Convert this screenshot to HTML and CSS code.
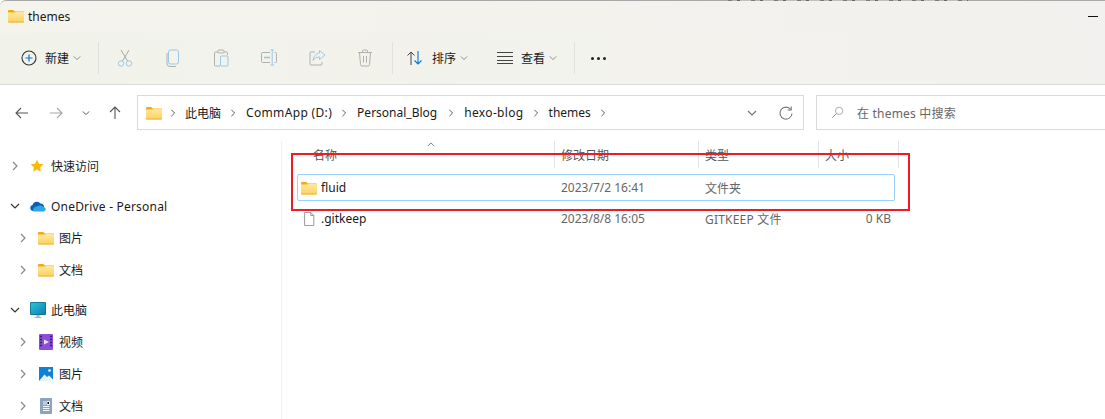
FILE: index.html
```html
<!DOCTYPE html>
<html lang="zh-CN">
<head>
<meta charset="utf-8">
<title>themes</title>
<link rel="stylesheet" href="styles.css">
</head>
<body>
<svg class="defs" width="0" height="0" aria-hidden="true">
  <defs>
    <linearGradient id="fg" x1="0" y1="0" x2="0" y2="1"><stop offset="0" stop-color="#ffe9a0"/><stop offset="1" stop-color="#fcd05e"/></linearGradient>
    <symbol id="folder" viewBox="0 0 16 14">
      <path d="M0 2a1 1 0 0 1 1-1h4.200l1.600 1.600H15a1 1 0 0 1 1 1V4H0z" fill="#f4a90f"/>
      <path d="M0 3.600h6.800L8 3h7a1 1 0 0 1 1 1v8.600a1 1 0 0 1-1 1H1a1 1 0 0 1-1-1z" fill="url(#fg)"/>
      <path d="M0 12.600h16a1 1 0 0 1-1 1H1a1 1 0 0 1-1-1z" fill="#eeb23a"/>
    </symbol>
    <symbol id="chev-r" viewBox="0 0 10 10"><path d="M3 1l4 4-4 4" fill="none" stroke="currentColor" stroke-width="1.2"/></symbol>
    <symbol id="chev-d" viewBox="0 0 10 10"><path d="M1 3l4 4 4-4" fill="none" stroke="currentColor" stroke-width="1.2"/></symbol>
  </defs>
</svg>
<div class="window">
  <header class="titlebar">
    <div class="top-noise"></div>
    <svg class="ico-16"><use href="#folder"/></svg>
    <span class="title">themes</span>
    <span class="minimize"></span>
  </header>
  <div class="toolbar">
    <button class="tool tool-new">
      <svg class="ico-20" viewBox="0 0 20 20"><circle cx="10" cy="10" r="7" fill="none" stroke="#333" stroke-width="1.1"/><path d="M10 6.500v7M6.500 10h7" stroke="#0a78d4" stroke-width="1.2"/></svg>
      <span>新建</span><svg class="caret"><use href="#chev-d"/></svg>
    </button>
    <i class="sep"></i>
    <div class="disabled-group">
      <svg class="ico-20" viewBox="0 0 20 20"><path d="M6 2l6.500 11M14 2L7.500 13" fill="none" stroke="#a9a9a9" stroke-width="1"/><circle cx="6" cy="15.500" r="2.700" fill="none" stroke="#9cc8e8"/><circle cx="14" cy="15.500" r="2.700" fill="none" stroke="#9cc8e8"/></svg>
      <svg class="ico-20" viewBox="0 0 20 20"><rect x="5.500" y="2" width="10" height="14" rx="2" fill="none" stroke="#9cc8e8"/><path d="M4 5v11a3 3 0 0 0 3 2.500h6" fill="none" stroke="#b0b0b0"/></svg>
      <svg class="ico-20" viewBox="0 0 20 20"><path d="M7 4H4.500a1 1 0 0 0-1 1v12a1 1 0 0 0 1 1H9M13 4h2.500a1 1 0 0 1 1 1v2" fill="none" stroke="#b0b0b0"/><rect x="7" y="2" width="6" height="3" rx="1" fill="none" stroke="#b0b0b0"/><rect x="9.500" y="8" width="7.500" height="10" rx="1" fill="none" stroke="#9cc8e8"/></svg>
      <svg class="ico-20" viewBox="0 0 20 20"><path d="M11 4.500H3.500a1 1 0 0 0-1 1v8a1 1 0 0 0 1 1H11M15.500 4.500h1a1 1 0 0 1 1 1v8a1 1 0 0 1-1 1h-1" fill="none" stroke="#b0b0b0"/><path d="M13.200 2v15M11.500 2h3.500M11.500 17H15" fill="none" stroke="#9cc8e8"/><path d="M5 9.500h6" stroke="#9cc8e8" stroke-width="1.600"/></svg>
      <svg class="ico-20" viewBox="0 0 20 20"><path d="M8 4H4a1 1 0 0 0-1 1v11a1 1 0 0 0 1 1h10a1 1 0 0 0 1-1v-2" fill="none" stroke="#b0b0b0"/><path d="M12.500 2.500l5.500 4.500-5.500 4.500V9c-3 0-5 1-6.500 3.500C6.500 8.500 9 5.500 12.500 5z" fill="none" stroke="#9cc8e8"/></svg>
      <svg class="ico-20" viewBox="0 0 20 20"><path d="M3 4.500h14M7.500 4.500V3a1 1 0 0 1 1-1h3a1 1 0 0 1 1 1v1.500M4.500 4.500l1 12a1.500 1.500 0 0 0 1.500 1.500h6a1.500 1.500 0 0 0 1.500-1.500l1-12M8.500 8v6.500M11.500 8v6.500" fill="none" stroke="#b0b0b0"/></svg>
    </div>
    <i class="sep"></i>
    <button class="tool tool-sort">
      <svg class="ico-20" viewBox="0 0 20 20"><path d="M6 17V4M2.500 7.500L6 4l3.500 3.500" fill="none" stroke="#444" stroke-width="1"/><path d="M13 3v13M9.500 12.500L13 16l3.500-3.500" fill="none" stroke="#0a78d4" stroke-width="1.100"/></svg>
      <span>排序</span><svg class="caret"><use href="#chev-d"/></svg>
    </button>
    <button class="tool tool-view">
      <svg class="ico-20" viewBox="0 0 20 20"><path d="M2 4.500h16M2 8.500h16M2 12.500h16M2 15.500h16" stroke="#444" stroke-width="1"/></svg>
      <span>查看</span><svg class="caret"><use href="#chev-d"/></svg>
    </button>
    <i class="sep sep-last"></i>
    <div class="more"><b></b><b></b><b></b></div>
  </div>
  <nav class="navrow">
    <svg class="nav-btn" viewBox="0 0 16 16"><path d="M14 8H2M7 3L2 8l5 5" fill="none" stroke="#555" stroke-width="1.100"/></svg>
    <svg class="nav-btn nav-fwd" viewBox="0 0 16 16"><path d="M2 8h12M9 3l5 5-5 5" fill="none" stroke="#a6a6a6" stroke-width="1.100"/></svg>
    <svg class="nav-drop"><use href="#chev-d"/></svg>
    <svg class="nav-btn nav-up" viewBox="0 0 16 16"><path d="M8 14V2M3 7l5-5 5 5" fill="none" stroke="#555" stroke-width="1.100"/></svg>
    <div class="address">
      <svg class="ico-16"><use href="#folder"/></svg>
      <svg class="crumb-sep crumb-first"><use href="#chev-r"/></svg><span>此电脑</span>
      <svg class="crumb-sep"><use href="#chev-r"/></svg><span class="wide">CommApp (D:)</span>
      <svg class="crumb-sep"><use href="#chev-r"/></svg><span class="pad-end">Personal_Blog</span>
      <svg class="crumb-sep"><use href="#chev-r"/></svg><span class="wide">hexo-blog</span>
      <svg class="crumb-sep"><use href="#chev-r"/></svg><span>themes</span>
      <svg class="crumb-sep"><use href="#chev-r"/></svg>
      <svg class="addr-drop"><use href="#chev-d"/></svg>
      <svg class="addr-refresh" viewBox="0 0 16 16"><path d="M12.800 4.500A6 6 0 1 0 14 8.500" fill="none" stroke="#777" stroke-width="1.100"/><path d="M13.200 1.500v3.500H9.700" fill="none" stroke="#777" stroke-width="1.100"/></svg>
    </div>
    <div class="search">
      <svg class="search-ico" viewBox="0 0 16 16"><circle cx="10" cy="6" r="4.500" fill="none" stroke="#9a9a9a"/><path d="M6.500 9.500L1.500 14.500" stroke="#8a78a8" stroke-width="1.100"/></svg>
      <span class="wide-sm">在 themes 中搜索</span>
    </div>
  </nav>
  <main class="main">
    <aside class="sidebar">
      <div class="tree-group">
        <div class="tree-row"><svg class="arrow"><use href="#chev-r"/></svg>
          <svg class="ico-16 ico-star" viewBox="0 0 16 16"><path d="M8 .8l2.200 4.700 5 .6-3.700 3.500 1 5L8 12.100l-4.500 2.500 1-5L.8 6.100l5-.6z" fill="#fdb900"/></svg><span>快速访问</span></div>
      </div>
      <div class="tree-group">
        <div class="tree-row"><svg class="arrow arrow-open"><use href="#chev-d"/></svg>
          <svg class="ico-16" viewBox="0 0 16 11"><path d="M3 10.500a3 3 0 0 1-.5-5.900A4.500 4.500 0 0 1 10.500 3 3.500 3.500 0 0 1 14 6.500l-9 4z" fill="#0a5fb4"/><path d="M3.500 11a3 3 0 0 1-.5-1.500c0-2 2-3.500 4-3.500 1.500-1.500 5-1.500 6.500.5A2.300 2.300 0 0 1 14 11z" fill="#2fa5e6"/></svg><span class="wide-sm">OneDrive - Personal</span></div>
        <div class="tree-row sub"><svg class="arrow"><use href="#chev-r"/></svg><svg class="ico-16"><use href="#folder"/></svg><span>图片</span></div>
        <div class="tree-row sub"><svg class="arrow"><use href="#chev-r"/></svg><svg class="ico-16"><use href="#folder"/></svg><span>文档</span></div>
      </div>
      <div class="tree-group">
        <div class="tree-row"><svg class="arrow arrow-open"><use href="#chev-d"/></svg>
          <svg class="ico-monitor" viewBox="0 0 16 16"><defs><linearGradient id="mon" x1="0" y1="0" x2="1" y2="1"><stop offset="0" stop-color="#2cc4d8"/><stop offset="1" stop-color="#0f7fb0"/></linearGradient></defs><rect x="6.500" y="12" width="3" height="3" fill="#a8b4bc"/><rect x="4.500" y="15" width="7" height="1" fill="#a8b4bc"/><rect y="0" width="16" height="13" rx="1" fill="#0f6f8f"/><rect x=".8" y=".8" width="14.400" height="11.400" fill="url(#mon)"/></svg><span>此电脑</span></div>
        <div class="tree-row sub"><svg class="arrow"><use href="#chev-r"/></svg>
          <svg class="ico-14" viewBox="0 0 14 16"><rect width="14" height="16" rx="1" fill="#8a4fd8"/><path d="M5 5.500l5 2.500-5 2.500z" fill="#efe6fb"/><path d="M1 2.500h2M1 5.500h2M1 8.500h2M1 11.500h2M11 2.500h2M11 5.500h2M11 8.500h2M11 11.500h2" stroke="#3c1a7a" stroke-width="1.300"/></svg><span>视频</span></div>
        <div class="tree-row sub"><svg class="arrow"><use href="#chev-r"/></svg>
          <svg class="ico-14" viewBox="0 0 14 14"><rect width="14" height="14" fill="#1082d6"/><path d="M0 14l5.500-6.500 2.500 2.500 2-1.500 4 4v1.500z" fill="#eaf5fc"/><circle cx="10.500" cy="3.500" r="1.300" fill="#fff"/></svg><span>图片</span></div>
        <div class="tree-row sub"><svg class="arrow"><use href="#chev-r"/></svg>
          <svg class="ico-14" viewBox="0 0 12 16"><rect width="12" height="16" rx="1" fill="#8aa4c0"/><path d="M3 4h3M3 6h3M7 3.500h2.500v3H7zM3 8.500h6.500M3 10.500h6.500M3 12.500h6.500" stroke="#f3f6fa" stroke-width="1"/></svg><span>文档</span></div>
      </div>
    </aside>
    <section class="content">
      <svg class="sort-caret" viewBox="0 0 10 6"><path d="M1 5l4-4 4 4" fill="none" stroke="#666" stroke-width="1"/></svg>
      <div class="grid-head">
        <span class="col-head">名称</span>
        <span class="col-head">修改日期</span>
        <span class="col-head">类型</span>
        <span class="col-head">大小</span>
      </div>
      <div class="file-row selected">
        <span class="cell-name"><svg class="ico-16"><use href="#folder"/></svg>fluid</span>
        <span class="cell">2023/7/2 16:41</span>
        <span class="cell">文件夹</span>
        <span class="cell cell-size"></span>
      </div>
      <div class="file-row">
        <span class="cell-name"><svg class="ico-16" viewBox="0 0 16 16"><path d="M3 .5h7l3.500 3.500v11.500H3z" fill="#fff" stroke="#8a8a8a"/><path d="M10 .5V4h3.500" fill="none" stroke="#8a8a8a"/></svg>.gitkeep</span>
        <span class="cell">2023/8/8 16:05</span>
        <span class="cell wide-sm">GITKEEP 文件</span>
        <span class="cell cell-size">0 KB</span>
      </div>
      <div class="highlight"></div>
    </section>
  </main>
</div>
</body>
</html>
```
FILE: styles.css
```css
* { box-sizing: border-box; }
html, body { margin: 0; height: 100%; overflow: hidden; }
body {
  font-family: "Noto Sans", "Noto Sans CJK SC", sans-serif;
  font-size: 12px;
  color: #1a1a1a;
  background: #fff;
}
.defs { position: absolute; }
svg { display: block; flex: none; }
.ico-16 { width: 16px; height: 14px; }
.ico-14 { width: 14px; height: 16px; }
.ico-20 { width: 20px; height: 20px; }
.ico-monitor { width: 16px; height: 16px; margin-left: 10px; margin-right: 5px; }
.window { width: 1105px; height: 419px; display: flex; flex-direction: column; }
.wide { letter-spacing: .34px; }
.wide-sm { letter-spacing: .2px; }
.pad-end { padding-right: 2px; }

.titlebar {
  position: relative;
  height: 33px;
  display: flex;
  align-items: center;
  padding: 0 0 2px 8px;
  border-top: 1px solid #a8a8a8;
  border-top-left-radius: 6px;
  background: linear-gradient(90deg, #f4f3ec, #f3f1ef);
}
.top-noise {
  position: absolute;
  left: 728px;
  top: -1px;
  width: 240px;
  height: 1px;
  background: repeating-linear-gradient(90deg, #7a7a7a 0 4px, #b4b4b0 4px 9px, #666 9px 12px, #c0c0bc 12px 23px);
}
.title { margin-left: 4px; }
.minimize { margin-left: auto; margin-right: 7px; width: 10px; height: 1px; background: #111; }

.toolbar {
  height: 52px;
  display: flex;
  align-items: center;
  padding: 0 0 1px 19px;
  border-bottom: 1px solid #dcdcd8;
  background: linear-gradient(90deg, #f1f3ea, #f3f2ed 60%, #f3f1ef);
}
.tool {
  display: flex;
  align-items: center;
  border: 0;
  padding: 0;
  background: none;
  font: inherit;
  color: #1a1a1a;
}
.tool span { margin-left: 6px; }
.tool-sort span { margin-left: 7px; }
.caret { width: 8px; height: 8px; margin-left: 4px; color: #888; }
.tool-new { width: 79px; }
.sep { width: 1px; height: 32px; background: #e2e2dd; flex: none; }
.disabled-group { display: flex; gap: 28px; margin-left: 16px; margin-right: 16px; width: 261px; }
.tool-sort { width: 90px; margin-left: 12px; }
.tool-view { width: 80px; }
.sep-last { margin-left: -1px; }
.more { display: flex; gap: 3px; margin-left: 16px; }
.more b { width: 3px; height: 3px; border-radius: 50%; background: #222; }

.navrow {
  height: 56px;
  display: flex;
  align-items: center;
  padding: 0 0 1px 14px;
}
.nav-btn { width: 16px; height: 16px; }
.nav-fwd { margin-left: 18px; }
.nav-drop { width: 8px; height: 8px; margin-left: 18px; color: #555; }
.nav-up { margin-left: 17px; }
.address {
  width: 667px;
  height: 35px;
  margin-left: 14px;
  display: flex;
  align-items: center;
  padding-left: 8px;
  border: 1px solid #dadada;
}
.crumb-sep { width: 8px; height: 8px; margin: 0 9px 0 8px; color: #555; }
.crumb-first { margin: 0 8px 0 7px; }
.addr-drop { width: 10px; height: 10px; margin-left: auto; color: #777; }
.addr-refresh { width: 16px; height: 16px; margin: 0 9px 0 21px; }
.search {
  flex: 1;
  height: 35px;
  margin-left: 12px;
  margin-right: -2px;
  display: flex;
  align-items: center;
  padding-left: 14px;
  border: 1px solid #dadada;
  color: #666;
}
.search-ico { width: 13px; height: 13px; margin-right: 13px; }

.main { flex: 1; display: flex; min-height: 0; }
.sidebar {
  width: 282px;
  flex: none;
  padding-top: 9px;
  border-right: 1px solid #f0f0f0;
  display: flex;
  flex-direction: column;
  gap: 8px;
}
.tree-row { height: 32px; display: flex; align-items: center; padding-left: 10px; }
.tree-row .arrow { width: 10px; height: 10px; color: #8a8a8a; }
.tree-row .arrow-open { color: #333; }
.tree-row .ico-16 { margin-left: 10px; margin-right: 5px; }
.tree-row .ico-star { margin-left: 9px; margin-right: 6px; }
.tree-row .ico-14 { margin-left: 11px; margin-right: 6px; }
.tree-row.sub { padding-left: 18px; }
.tree-row.sub .ico-16 { margin-left: 10px; margin-right: 5px; }

.content { flex: 1; position: relative; padding-left: 15px; }
.sort-caret { position: absolute; left: 145px; top: 1px; width: 8px; height: 5px; }
.grid-head { display: grid; grid-template-columns: 258px 144px 120px 80px; height: 27px; }
.col-head {
  display: flex;
  align-items: center;
  padding-left: 6px;
  border-right: 1px solid #e3e3e3;
  color: #555;
}
.col-head:first-child { padding-left: 16px; }
.file-row {
  display: grid;
  grid-template-columns: 258px 144px 120px 76px;
  width: 598px;
  height: 27px;
  align-items: center;
  margin-top: 4px;
  color: #666;
}
.file-row.selected {
  grid-template-columns: 257px 144px 120px 75px;
  margin-top: 6px;
  border: 1px solid #99d1ff;
  border-radius: 2px;
}
.selected .cell-name { padding-left: 3px; }
.file-row:not(.selected) .cell-name { padding-left: 4px; }
.cell-name { display: flex; align-items: center; gap: 4px; color: #1a1a1a; }
.cell { padding-left: 6px; }
.cell-size { text-align: right; padding-right: 4px; }
.highlight {
  position: absolute;
  left: 9px;
  top: 12px;
  width: 619px;
  height: 58px;
  border: 2px solid #ed1c24;
  pointer-events: none;
}
```
